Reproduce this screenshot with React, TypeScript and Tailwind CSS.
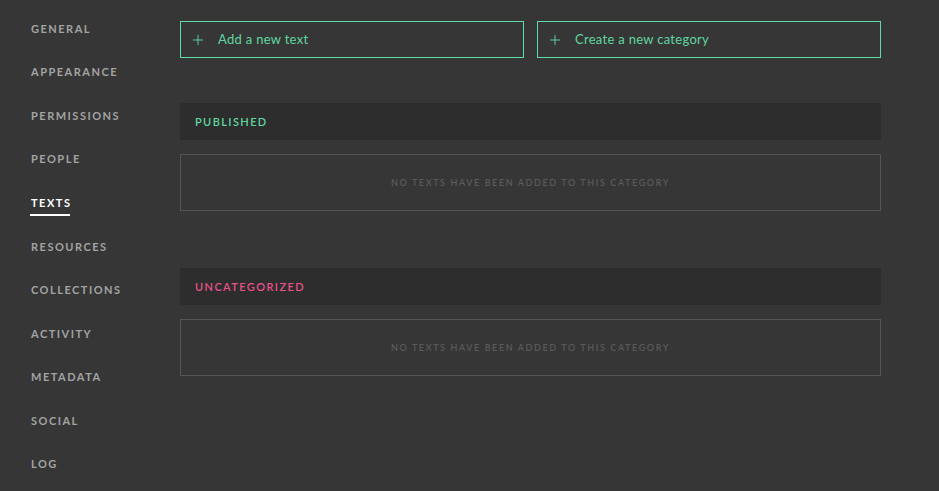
import { Plus } from 'lucide-react';

const navItems = [
  'General',
  'Appearance',
  'Permissions',
  'People',
  'Texts',
  'Resources',
  'Collections',
  'Activity',
  'Metadata',
  'Social',
  'Log',
];

function ActionButton({ label }: { label: string }) {
  return (
    <button
      type="button"
      className="flex h-[37px] flex-1 items-center gap-[12px] border border-[#5fdba6] pl-[9px] text-[13px] tracking-[0.3px] text-[#5fd6a1]"
    >
      <Plus size={16} strokeWidth={1.4} />
      <span>{label}</span>
    </button>
  );
}

function Category({ name, color }: { name: string; color: string }) {
  return (
    <section>
      <div className="flex h-[37px] items-center bg-[#2d2d2d] pt-[2px] pl-[15px]">
        <span className={`text-[11px] font-semibold tracking-[1.4px] uppercase ${color}`}>
          {name}
        </span>
      </div>
      <div className="mt-[14px] flex h-[57px] items-center justify-center border border-[#555555]">
        <span className="text-[9px] font-semibold tracking-[1.6px] text-[#5a5a5a] uppercase">
          No texts have been added to this category
        </span>
      </div>
    </section>
  );
}

export default function App() {
  return (
    <div
      className="flex h-[491px] w-full bg-[#363636]"
      style={{ fontFamily: 'Lato, "Noto Sans", sans-serif' }}
    >
      <nav className="flex w-[180px] shrink-0 flex-col pt-[7px] pl-[31px]">
        {navItems.map((item) => {
          const active = item === 'Texts';
          return (
            <div key={item} className="flex h-[43.6px] items-center">
              <span
                className={`relative text-[11px] font-bold tracking-[1.5px] uppercase ${
                  active ? 'text-white' : 'text-[#a3a3a3]'
                }`}
              >
                {item}
                {active && (
                  <span className="absolute -bottom-[5px] -left-px h-[2px] w-[40px] bg-white" />
                )}
              </span>
            </div>
          );
        })}
      </nav>

      <main className="w-[701px] pt-[21px]">
        <div className="flex gap-[13px]">
          <ActionButton label="Add a new text" />
          <ActionButton label="Create a new category" />
        </div>
        <div className="mt-[45px] flex flex-col gap-[57px]">
          <Category name="Published" color="text-[#5fd6a1]" />
          <Category name="Uncategorized" color="text-[#e8528a]" />
        </div>
      </main>
    </div>
  );
}
